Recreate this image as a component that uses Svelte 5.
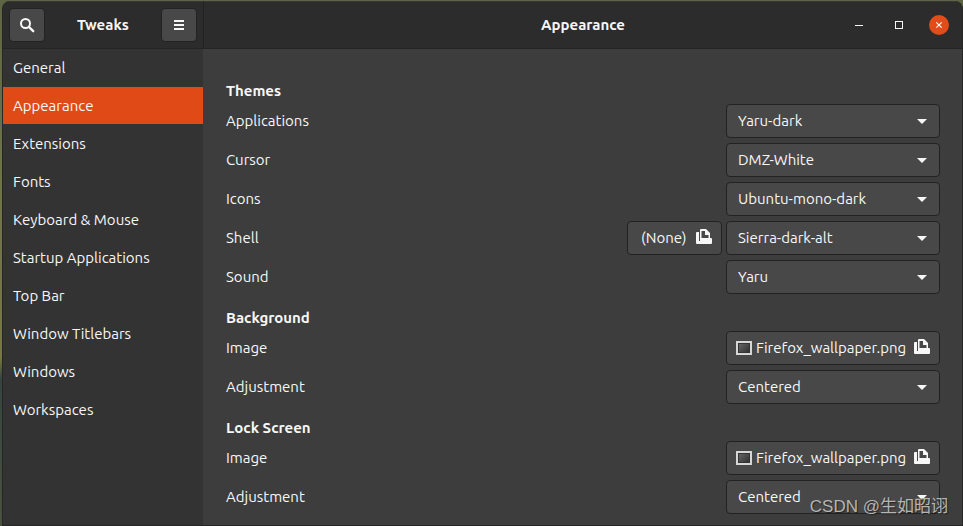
<script lang="ts">
  interface Row {
    id: string;
    label: string;
    value: string;
    kind: "select" | "file";
    options?: string[];
    extra?: string;
  }

  interface Section {
    title: string;
    rows: Row[];
  }

  const pages = [
    "General",
    "Appearance",
    "Extensions",
    "Fonts",
    "Keyboard & Mouse",
    "Startup Applications",
    "Top Bar",
    "Window Titlebars",
    "Windows",
    "Workspaces",
  ];

  const themes = ["Adwaita", "Yaru", "Yaru-dark"];
  const adjustments = ["None", "Wallpaper", "Centered", "Scaled", "Zoom"];

  let sections: Section[] = $state([
    {
      title: "Themes",
      rows: [
        { id: "applications", label: "Applications", value: "Yaru-dark", kind: "select", options: themes },
        { id: "cursor", label: "Cursor", value: "DMZ-White", kind: "select", options: ["DMZ-Black", "DMZ-White"] },
        { id: "icons", label: "Icons", value: "Ubuntu-mono-dark", kind: "select", options: ["Ubuntu-mono-dark", "Yaru"] },
        { id: "shell", label: "Shell", value: "Sierra-dark-alt", kind: "select", options: ["Sierra-dark-alt", "Yaru"], extra: "(None)" },
        { id: "sound", label: "Sound", value: "Yaru", kind: "select", options: ["Yaru"] },
      ],
    },
    {
      title: "Background",
      rows: [
        { id: "bg-image", label: "Image", value: "Firefox_wallpaper.png", kind: "file" },
        { id: "bg-adjustment", label: "Adjustment", value: "Centered", kind: "select", options: adjustments },
      ],
    },
    {
      title: "Lock Screen",
      rows: [
        { id: "lock-image", label: "Image", value: "Firefox_wallpaper.png", kind: "file" },
        { id: "lock-adjustment", label: "Adjustment", value: "Centered", kind: "select", options: adjustments },
      ],
    },
  ]);

  let current = $state("Appearance");
</script>

{#snippet openIcon()}
  <svg class="open-icon" viewBox="0 0 16 16" aria-hidden="true">
    <path d="M0 4a1 1 0 0 1 1-1h2v9h1V1a1 1 0 0 1 1-1h5l4 4v5h1a1 1 0 0 1 1 1v4a1 1 0 0 1-1 1H1a1 1 0 0 1-1-1zM5.5 2v7h7V6H9V2z" fill-rule="evenodd" />
  </svg>
{/snippet}

<div class="desktop">
  <div class="window">
    <header class="side-header">
      <button class="tool" aria-label="Search">
        <svg viewBox="0 0 16 16" aria-hidden="true">
          <circle cx="6.5" cy="6.5" r="4.5" fill="none" stroke="currentColor" stroke-width="2" />
          <path d="M10 10l4.2 4.2" fill="none" stroke="currentColor" stroke-width="2.4" stroke-linecap="round" />
        </svg>
      </button>
      <h1>Tweaks</h1>
      <button class="tool" aria-label="Menu">
        <svg viewBox="0 0 16 16" aria-hidden="true">
          <path d="M3 3h10v2H3zM3 7h10v2H3zM3 11h10v2H3z" />
        </svg>
      </button>
    </header>

    <header class="main-header">
      <h2>{current}</h2>
      <div class="controls">
        <button class="control" aria-label="Minimize">
          <svg viewBox="0 0 20 20" aria-hidden="true"><path d="M6 10h8v1H6z" /></svg>
        </button>
        <button class="control" aria-label="Maximize">
          <svg viewBox="0 0 20 20" aria-hidden="true"><path d="M6 6h8v8H6zM7 7v6h6V7z" fill-rule="evenodd" /></svg>
        </button>
        <button class="control close" aria-label="Close">
          <svg viewBox="0 0 20 20" aria-hidden="true">
            <path d="M7.3 7.3l5.4 5.4M12.7 7.3l-5.4 5.4" stroke="currentColor" stroke-width="1.2" />
          </svg>
        </button>
      </div>
    </header>

    <nav class="sidebar">
      {#each pages as page}
        <button class="page" class:active={page === current} onclick={() => (current = page)}>
          {page}
        </button>
      {/each}
    </nav>

    <main>
      {#each sections as section}
        <section>
          <h3>{section.title}</h3>
          {#each section.rows as row}
            <div class="row">
              <label for={row.id}>{row.label}</label>
              {#if row.extra}
                <button class="box extra">
                  {row.extra}
                  {@render openIcon()}
                </button>
              {/if}
              {#if row.kind === "select"}
                <div class="select">
                  <select class="box" id={row.id} bind:value={row.value}>
                    {#each row.options ?? [] as option}
                      <option value={option}>{option}</option>
                    {/each}
                  </select>
                  <svg class="arrow" viewBox="0 0 10 5" aria-hidden="true"><path d="M0 0h10L5 5z" /></svg>
                </div>
              {:else}
                <button class="box file" id={row.id}>
                  <span class="thumb"></span>
                  <span class="name">{row.value}</span>
                  {@render openIcon()}
                </button>
              {/if}
            </div>
          {/each}
        </section>
      {/each}
    </main>
  </div>
  <span class="watermark">CSDN @生如昭诩</span>
</div>

<style>
  :global(body) {
    margin: 0;
  }

  .desktop {
    position: relative;
    box-sizing: border-box;
    min-height: 100vh;
    padding: 1px 0 0 2px;
    display: flex;
    background: linear-gradient(#5d6545, #6f7449 35%, #77783f 68%, #35443f 72%, #4a5240);
    font-family: Ubuntu, "Noto Sans", sans-serif;
    font-size: 15px;
    line-height: 20px;
    color: #f7f7f7;
  }

  .window {
    flex: 1;
    display: grid;
    grid-template-columns: 201px 1fr;
    grid-template-rows: 48px 1fr;
    border: solid #262626;
    border-width: 0 1px 1px;
    border-radius: 8px 8px 0 0;
    overflow: hidden;
    background: #3d3d3d;
  }

  button,
  select {
    font: inherit;
    color: inherit;
    margin: 0;
    cursor: pointer;
  }

  svg {
    fill: currentColor;
    display: block;
  }

  h1,
  h2,
  h3 {
    margin: 0;
    font-size: 15px;
    font-weight: 700;
  }

  header {
    box-sizing: border-box;
    background: #2c2c2c;
    border-top: 1px solid #383838;
    border-bottom: 1px solid #242424;
  }

  .side-header {
    display: flex;
    align-items: center;
    justify-content: space-between;
    padding: 0 6px;
    border-right: 1px solid #222;
  }

  .tool {
    width: 36px;
    height: 34px;
    padding: 0;
    display: flex;
    align-items: center;
    justify-content: center;
    background: #484848;
    border: 1px solid #222;
    border-radius: 4px;
  }

  .tool svg {
    width: 16px;
    height: 16px;
  }

  .main-header {
    display: grid;
    grid-template-columns: 1fr auto 1fr;
    align-items: center;
    padding: 0 13px;
  }

  .main-header h2 {
    grid-column: 2;
  }

  .controls {
    display: flex;
    justify-content: flex-end;
    gap: 20px;
  }

  .control {
    width: 20px;
    height: 20px;
    padding: 0;
    border: 0;
    border-radius: 50%;
    background: none;
  }

  .close {
    background: #e14c18;
  }

  .sidebar {
    background: #333;
    display: flex;
    flex-direction: column;
    gap: 1px;
    margin-right: 1px;
  }

  .page {
    height: 37px;
    padding: 0 10px;
    border: 0;
    background: none;
    text-align: left;
  }

  .page.active {
    background: #e04a16;
  }

  main {
    padding: 29px 22px 10px;
    display: flex;
    flex-direction: column;
    gap: 11px;
  }

  section {
    display: flex;
    flex-direction: column;
    gap: 5px;
  }

  h3 {
    line-height: 26px;
    margin-bottom: -5px;
  }

  .row {
    display: flex;
    align-items: center;
    gap: 4px;
  }

  .row label {
    flex: 1;
  }

  .box {
    box-sizing: border-box;
    height: 34px;
    background: #484848;
    border: 1px solid #222;
    border-radius: 4px;
  }

  .select {
    position: relative;
    width: 214px;
  }

  .select select {
    appearance: none;
    width: 100%;
    padding: 0 30px 0 11px;
    display: block;
  }

  .arrow {
    position: absolute;
    right: 13px;
    top: 15px;
    width: 10px;
    height: 5px;
    pointer-events: none;
  }

  .extra,
  .file {
    display: flex;
    align-items: center;
    padding: 0 9px;
  }

  .extra {
    width: 95px;
    padding-left: 13px;
    justify-content: space-between;
  }

  .file {
    width: 214px;
    gap: 4px;
  }

  .name {
    flex: 1;
    text-align: left;
    white-space: nowrap;
  }

  .thumb {
    box-sizing: border-box;
    width: 16px;
    height: 14px;
    border: 2px solid #d6d6d6;
    background: linear-gradient(135deg, #6a6a6a, #2c2c2c);
    box-shadow: inset 0 0 0 1px #333;
  }

  .open-icon {
    width: 16px;
    height: 16px;
    flex: none;
    margin-bottom: 2px;
  }

  .watermark {
    position: absolute;
    right: 15px;
    bottom: 7px;
    font-family: "Liberation Sans", "Noto Sans CJK SC", sans-serif;
    font-size: 17px;
    line-height: 24px;
    color: #b5b5b5;
    text-shadow: 1px 1px 1px #222;
    pointer-events: none;
  }
</style>
